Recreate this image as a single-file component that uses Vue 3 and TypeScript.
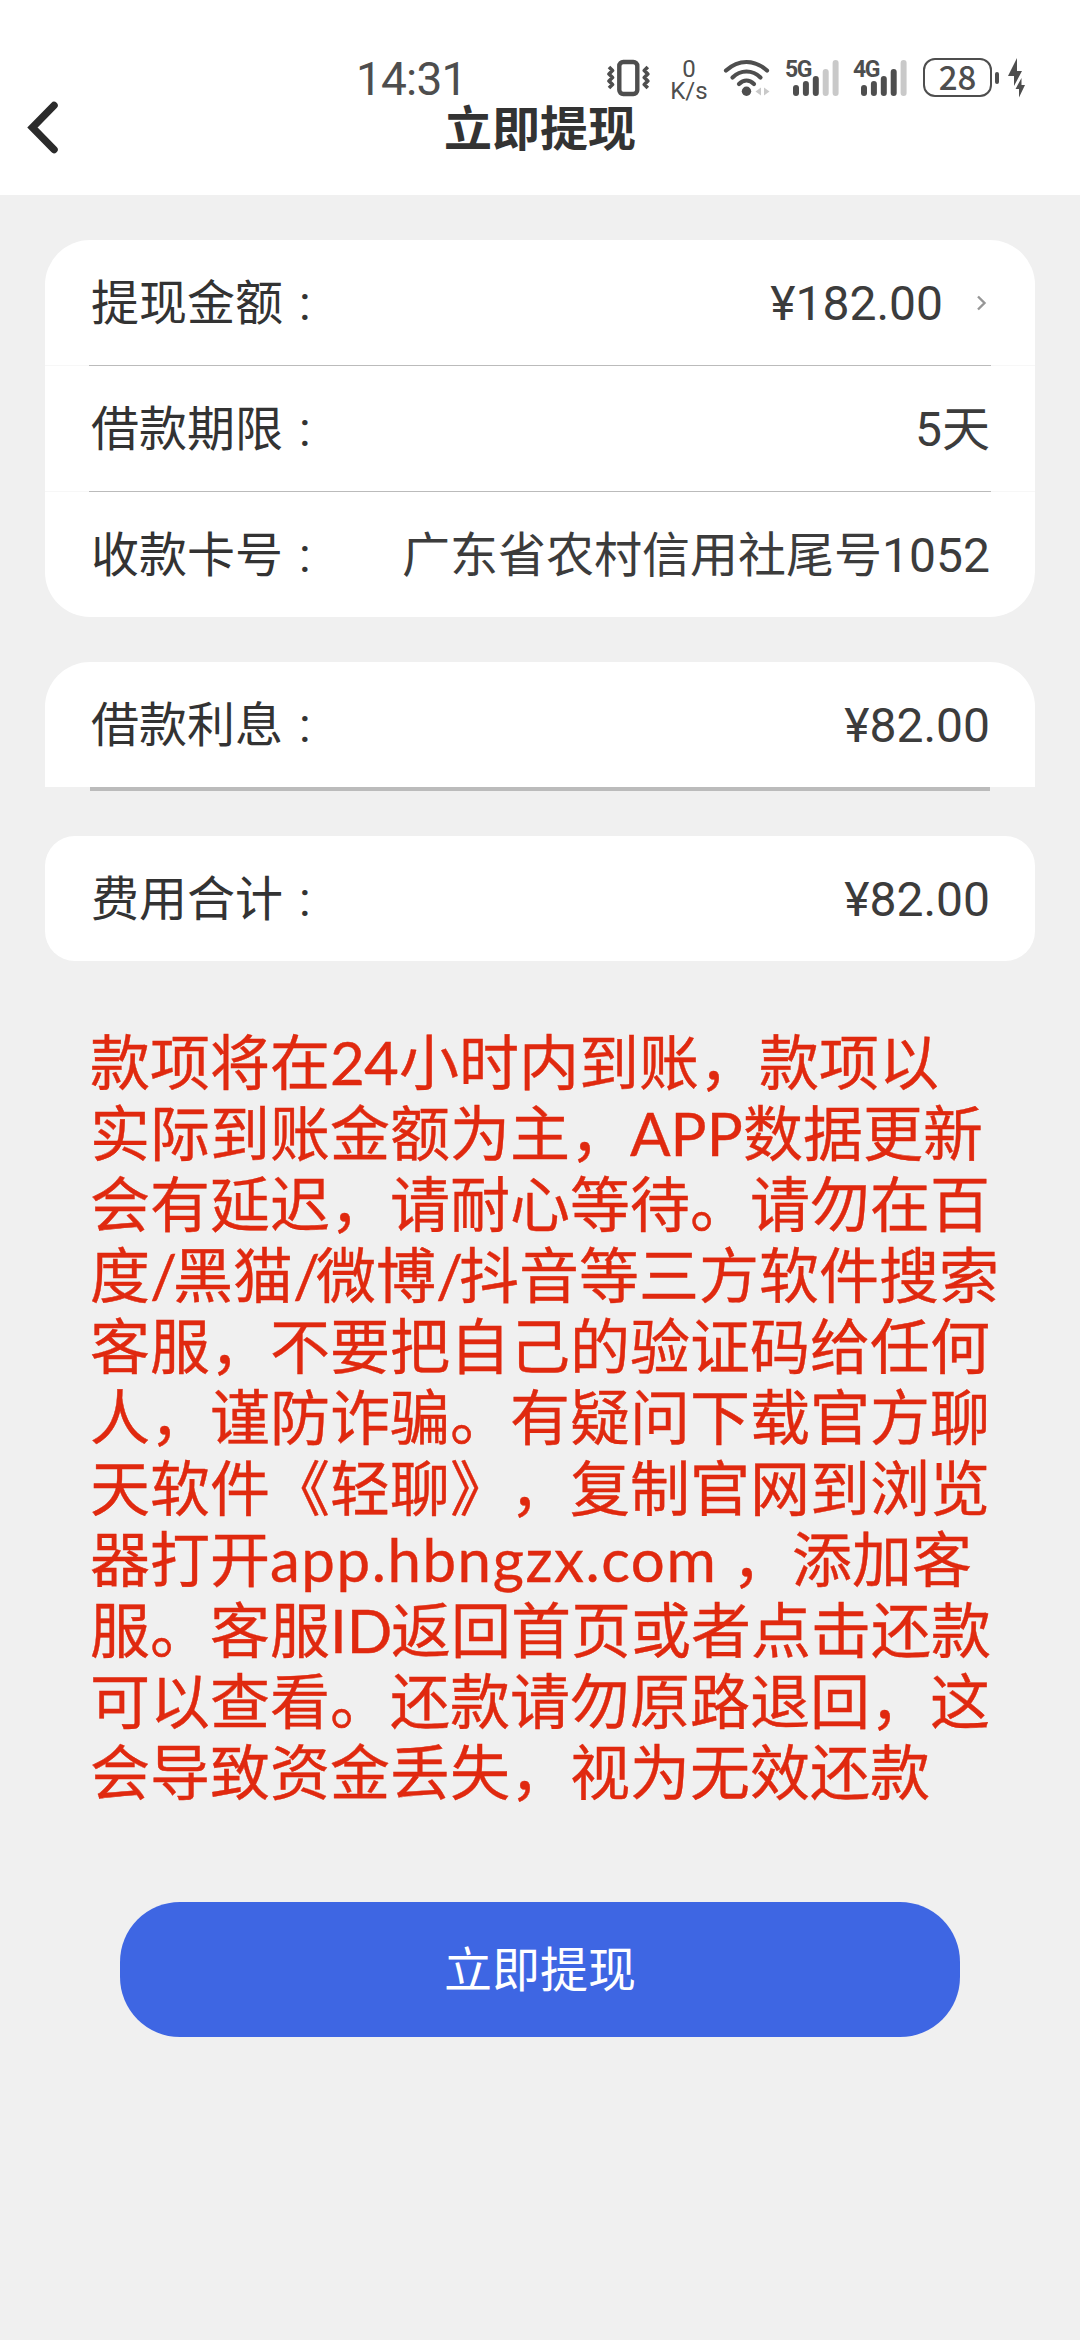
<script setup lang="ts">
interface Row {
  label: string
  value: string
  link?: boolean
}

interface Segment {
  text: string
  width?: number
  spacing?: number
}

interface Bar {
  x: number
  y: number
  on: boolean
}

const loanRows: Row[] = [
  { label: '提现金额', value: '¥182.00', link: true },
  { label: '借款期限', value: '5天' },
  { label: '收款卡号', value: '广东省农村信用社尾号1052' },
]
const interestRows: Row[] = [{ label: '借款利息', value: '¥82.00' }]
const totalRows: Row[] = [{ label: '费用合计', value: '¥82.00' }]

const cards = [
  { kind: 'loan', rows: loanRows },
  { kind: 'interest', rows: interestRows },
  { kind: 'total', rows: totalRows },
]

const slash: Segment = { text: '/', width: 23, spacing: 0 }
const notice: Segment[][] = [
  [{ text: '款项将在' }, { text: '24', width: 69, spacing: -0.8 }, { text: '小时内到账，款项以' }],
  [{ text: '实际到账金额为主，' }, { text: 'APP', width: 113, spacing: 0 }, { text: '数据更新' }],
  [{ text: '会有延迟，请耐心等待。请勿在百' }],
  [{ text: '度' }, slash, { text: '黑猫' }, slash, { text: '微博' }, slash, { text: '抖音等三方软件搜索' }],
  [{ text: '客服，不要把自己的验证码给任何' }],
  [{ text: '人，谨防诈骗。有疑问下载官方聊' }],
  [{ text: '天软件《轻聊》，复制官网到浏览' }],
  [{ text: '器打开' }, { text: 'app.hbngzx.com', width: 462, spacing: 1.55 }, { text: '，添加客' }],
  [{ text: '服。客服' }, { text: 'ID', width: 61, spacing: 0 }, { text: '返回首页或者点击还款' }],
  [{ text: '可以查看。还款请勿原路退回，这' }],
  [{ text: '会导致资金丢失，视为无效还款' }],
]

const bars = (on: number): Bar[] =>
  [25, 21, 16, 9, 0].map((y, i) => ({ x: i * 9.9, y, on: i < on }))
const networks = [
  { name: '5G', bars: bars(3) },
  { name: '4G', bars: bars(4) },
]
</script>

<template>
  <div class="page">
    <header class="header">
      <div class="status">
        <span class="clock">14:31</span>
        <svg class="vibrate" width="46" height="40" viewBox="0 0 46 40" fill="none" stroke="#4e4e4e">
          <rect x="12.3" y="4" width="18" height="32" rx="4" stroke-width="4.4" />
          <path d="M2 9l3.500 3.500L2 16l3.500 3.500L2 23l3.500 3.500L2 30M40.800 9l-3.500 3.500L40.800 16l-3.500 3.500L40.800 23l-3.500 3.500L40.800 30" stroke-width="3.6" stroke-linejoin="round" />
        </svg>
        <div class="speed"><span>0</span><span>K/s</span></div>
        <svg class="wifi" width="48" height="40" viewBox="0 0 48 40" fill="none" stroke="#4e4e4e" stroke-width="4.200" stroke-linecap="round">
          <path d="M3 12.500Q12.500 4 23.500 4T44 12.500" />
          <path d="M9.500 19.500Q15.500 13.500 23.500 13.500T37.500 19.500" />
          <path d="M16 26Q19.500 22.500 23.500 22.500T31 26" />
          <circle cx="23.500" cy="33.300" r="4.700" fill="#4e4e4e" stroke="none" />
          <path d="M32.500 33.500l5.500-4v8zM46.500 33.500l-5.500-4v8z" fill="#c9c9c9" stroke="none" />
        </svg>
        <div v-for="net in networks" :key="net.name" class="signal">
          <span class="net">{{ net.name }}</span>
          <svg width="46" height="36" viewBox="0 0 46 36">
            <rect v-for="bar in net.bars" :key="bar.x" :x="bar.x" :y="bar.y" width="6" :height="36 - bar.y" rx="3" :fill="bar.on ? '#4e4e4e' : '#c9c9c9'" />
          </svg>
        </div>
        <div class="battery">28</div>
        <i class="tip"></i>
        <svg class="bolt" width="18" height="40" viewBox="0 0 18 40" fill="#4e4e4e">
          <path d="M9 0v13h5L6 28V18H0z" />
          <path d="M13.500 20v7H17l-6 12.500V31H7.500z" />
        </svg>
      </div>
      <div class="nav">
        <svg class="back" width="36" height="60" viewBox="0 0 36 60" fill="none" stroke="#2b2b2b" stroke-width="7.500" stroke-linecap="round">
          <path d="M27 7.500L5.500 29.500L27 51.500" stroke-linejoin="miter" />
        </svg>
        <h1 class="title">立即提现</h1>
      </div>
    </header>

    <main class="content">
      <section v-for="card in cards" :key="card.kind" class="card" :class="card.kind">
        <div v-for="row in card.rows" :key="row.label" class="row">
          <span class="label">{{ row.label }}<span class="colon">:</span></span>
          <span class="value">{{ row.value }}</span>
          <svg v-if="row.link" class="more" width="12" height="18" viewBox="0 0 12 18" fill="none" stroke="#969696" stroke-width="2.400">
            <path d="M2 2.500l6.500 6.500L2 15.500" />
          </svg>
        </div>
      </section>

      <div class="notice">
        <div v-for="(line, i) in notice" :key="i" class="line">
          <span
            v-for="(seg, j) in line"
            :key="j"
            :class="{ latin: seg.width }"
            :style="seg.width ? { width: seg.width + 'px', letterSpacing: seg.spacing + 'px' } : undefined"
          >{{ seg.text }}</span>
        </div>
      </div>

      <button class="submit" type="button">立即提现</button>
    </main>
  </div>
</template>

<style>
body {
  margin: 0;
  background: #f0f0f0;
}
</style>

<style scoped>
.page {
  width: 1080px;
  height: 2340px;
  overflow: hidden;
  background: #f0f0f0;
  color: #333;
  font-family: "Noto Sans CJK SC", sans-serif;
}
.header {
  box-sizing: border-box;
  height: 195px;
  padding-top: 58px;
  background: #fff;
}
.status {
  display: flex;
  height: 40px;
  color: #4e4e4e;
  font-family: Roboto, sans-serif;
}
.clock {
  width: 251px;
  margin-left: 356px;
  font-size: 46px;
  line-height: 42px;
  letter-spacing: -0.8px;
}
.vibrate {
  flex: none;
}
.speed {
  display: flex;
  flex-direction: column;
  align-items: center;
  width: 40px;
  margin-left: 16px;
  font-size: 24px;
  line-height: 22px;
}
.wifi {
  flex: none;
  margin-left: 14px;
}
.signal {
  position: relative;
  width: 46px;
  height: 38px;
  margin-left: 22px;
  padding-top: 2px;
}
.net {
  position: absolute;
  top: 1px;
  left: -8px;
  font-size: 23px;
  font-weight: 700;
  line-height: 22px;
  letter-spacing: -1.5px;
}
.battery {
  box-sizing: border-box;
  width: 69px;
  height: 39px;
  margin-left: 16px;
  border: 2.5px solid #4e4e4e;
  border-radius: 12px;
  font: 500 33px/32px "Noto Sans CJK SC", sans-serif;
  text-align: center;
}
.tip {
  width: 4px;
  height: 12px;
  margin: 14px 0 0 3px;
  border-radius: 2px;
  background: #4e4e4e;
}
.bolt {
  flex: none;
  margin-left: 9px;
}
.nav {
  display: grid;
  grid-template-columns: 64px 1fr 64px;
  align-items: center;
  height: 58px;
}
.back {
  margin-left: 27px;
}
.title {
  align-self: start;
  margin: 0;
  font-size: 48px;
  font-weight: 700;
  line-height: 54px;
  text-align: center;
}
.content {
  display: flex;
  flex-direction: column;
  padding: 45px 45px 0;
}
.card {
  border-radius: 45px;
  background: #fff;
}
.row {
  display: flex;
  align-items: center;
  height: 125px;
  padding: 0 45px;
  font-size: 48px;
  line-height: 58px;
}
.row + .row {
  border-top: 1px solid;
  border-image: linear-gradient(90deg, #f7f7f7 45px, #bbb 45px, #bbb 945px, #f7f7f7 945px) 1;
}
.label {
  flex: 1;
  padding: 0 0 2px 1px;
}
.colon {
  margin-left: 16px;
  font-family: Roboto, sans-serif;
}
.value {
  padding-top: 2px;
  color: #3c3c3c;
  font-family: Roboto, "Noto Sans CJK SC", sans-serif;
}
.more {
  margin-left: 33px;
  margin-right: 2px;
}
.interest {
  margin-top: 45px;
  border-radius: 45px 45px 0 0;
}
.interest::after {
  content: "";
  display: block;
  height: 4px;
  background: linear-gradient(90deg, #f0f0f0 45px, #bbb 45px, #bbb 945px, #f0f0f0 945px);
}
.total {
  margin-top: 45px;
  border-radius: 30px;
}
.notice {
  margin: 62px 0 0 45px;
  color: #e0290f;
  font-size: 60px;
  text-spacing-trim: space-all;
  -webkit-text-stroke: 0.4px #e0290f;
}
.line {
  height: 71px;
  line-height: 71px;
  white-space: nowrap;
}
.latin {
  display: inline-block;
  font-family: Lato, sans-serif;
  line-height: 60px;
}
.submit {
  height: 135px;
  margin: 98px 75px 0;
  padding: 0 0 6px;
  border: 0;
  border-radius: 60px;
  background: #3e66e3;
  color: #fff;
  font: 48px/129px "Noto Sans CJK SC", sans-serif;
}
</style>
